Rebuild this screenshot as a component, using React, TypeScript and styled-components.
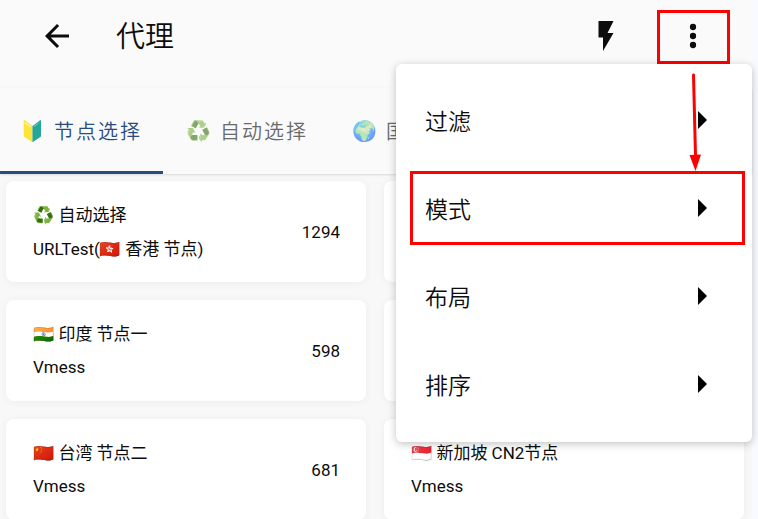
import React from 'react';
import styled, { createGlobalStyle } from 'styled-components';

const Global = createGlobalStyle`
  * { box-sizing: border-box; }
  body { margin: 0; background: #f9faff; overflow: hidden; }
  button { font: inherit; color: inherit; background: none; border: 0; padding: 0; margin: 0; cursor: pointer; }
`;

const Screen = styled.div`
  position: relative;
  margin-right: 6px;
  min-height: 100vh;
  background: #f8f8f8;
  color: #0c0c0c;
  font-family: Roboto, 'Noto Sans CJK SC', 'Noto Color Emoji', sans-serif;
  font-size: 17px;
  font-weight: 350;
`;

const AppBar = styled.header`
  display: flex;
  align-items: center;
  padding: 10px 22px 24px 21px;
  background: #fafafa;
`;

const Title = styled.h1`
  flex: 1;
  margin: 0 0 0 22px;
  font-size: 29px;
  line-height: 54px;
  font-weight: 350;
`;

const Actions = styled.div`
  display: flex;
  gap: 14px;
`;

const IconButton = styled.button<{ $marked?: boolean }>`
  display: flex;
  align-items: center;
  justify-content: center;
  width: 73px;
  height: 54px;
  padding: 0 1px 2px 0;
  border: 3px solid ${(p) => (p.$marked ? '#fe0000' : 'transparent')};
`;

const MenuAnchor = styled.div`
  position: relative;
`;

const Pointer = styled.svg`
  position: absolute;
  top: 63px;
  left: 30px;
  z-index: 3;
  pointer-events: none;
`;

const Tabs = styled.nav`
  display: flex;
  height: 86px;
  overflow: hidden;
  background: #fafafa;
  box-shadow: 0 1px 2px rgba(0, 0, 0, 0.12);
`;

const Tab = styled.button<{ $active?: boolean }>`
  display: flex;
  flex: none;
  align-items: center;
  gap: 5px;
  padding: 2px 21px 0 23px;
  border-bottom: 3px solid ${(p) => (p.$active ? '#284b80' : 'transparent')};
  color: ${(p) => (p.$active ? '#284b80' : '#6a6a6a')};
  font-size: 20px;
  letter-spacing: 2px;
  white-space: nowrap;

  &:first-child { padding-left: 20px; }
`;

const TabEmoji = styled.span<{ $active?: boolean }>`
  width: 29px;
  text-align: left;
  opacity: ${(p) => (p.$active ? 1 : 0.6)};
`;

const Grid = styled.main`
  display: grid;
  grid-template-columns: 1fr 1fr;
  grid-auto-rows: 101px;
  gap: 18px;
  padding: 7px 8px 0 6px;
`;

const Card = styled.article`
  display: flex;
  align-items: center;
  justify-content: space-between;
  padding: 0 26px 0 27px;
  border-radius: 8px;
  background: #fff;
  box-shadow: 0 1px 8px rgba(0, 0, 0, 0.05);
  font-weight: 400;
`;

const Line = styled.div`
  display: flex;
  align-items: center;
  height: 34px;
  padding-bottom: 2px;
  white-space: pre;
`;

const Popup = styled.ul`
  position: absolute;
  top: 64px;
  right: 0;
  z-index: 2;
  width: 356px;
  margin: 0;
  padding: 12px 7px 14px 14px;
  list-style: none;
  border-radius: 6px;
  background: #fff;
  box-shadow: 0 2px 8px rgba(0, 0, 0, 0.24);
`;

const Row = styled.li`
  display: flex;
  align-items: center;
  height: 88px;
`;

const Option = styled.button<{ $marked?: boolean }>`
  display: flex;
  align-items: center;
  justify-content: space-between;
  width: 100%;
  height: 74px;
  padding: 0 35px 0 12px;
  border: 3px solid ${(p) => (p.$marked ? '#fe0000' : 'transparent')};
  font-size: 23px;
`;

const tabs = [
  { emoji: '🔰', label: '节点选择' },
  { emoji: '♻️', label: '自动选择' },
  { emoji: '🌍', label: '国' },
];

const nodes = [
  { name: '♻️ 自动选择', type: 'URLTest(🇭🇰 香港 节点)', delay: '1294' },
  null,
  { name: '🇮🇳 印度 节点一', type: 'Vmess', delay: '598' },
  null,
  { name: '🇨🇳 台湾 节点二', type: 'Vmess', delay: '681' },
  { name: '🇸🇬 新加坡 CN2节点', type: 'Vmess', delay: '' },
];

export default function App() {
  return (
    <>
      <Global />
      <Screen>
        <AppBar>
          <IconButton aria-label="返回">
            <svg width="36" height="36" viewBox="0 0 24 24" fill="#0c0c0c">
              <path d="M20 11H7.83l5.59-5.59L12 4l-8 8 8 8 1.41-1.41L7.83 13H20v-2z" />
            </svg>
          </IconButton>
          <Title>代理</Title>
          <Actions>
            <IconButton aria-label="测速">
              <svg width="36" height="36" viewBox="0 0 24 24" fill="#0c0c0c">
                <path d="M7 2v11h3v9l7-12h-4l4-8z" />
              </svg>
            </IconButton>
            <MenuAnchor>
              <IconButton aria-label="更多" $marked>
                <svg width="36" height="36" viewBox="0 0 24 24" fill="#0c0c0c">
                  <circle cx="12" cy="6" r="2.1" />
                  <circle cx="12" cy="12" r="2.1" />
                  <circle cx="12" cy="18" r="2.1" />
                </svg>
              </IconButton>
              <Pointer width="16" height="99" viewBox="0 0 16 99">
                <path d="M6.5 2L8.5 83" stroke="#fe0000" strokeWidth="3" strokeLinecap="round" />
                <path d="M2.5 82L14 81.5L8.5 98z" fill="#fe0000" />
              </Pointer>
            </MenuAnchor>
          </Actions>
        </AppBar>
        <Tabs>
          {tabs.map((t, i) => (
            <Tab key={t.label} $active={i === 0}>
              <TabEmoji $active={i === 0}>{t.emoji}</TabEmoji>
              {t.label}
            </Tab>
          ))}
        </Tabs>
        <Grid>
          {nodes.map((n, i) => (
            <Card key={i}>
              {n && (
                <>
                  <div>
                    <Line>{n.name}</Line>
                    <Line>{n.type}</Line>
                  </div>
                  <span>{n.delay}</span>
                </>
              )}
            </Card>
          ))}
        </Grid>
        <Popup>
          {['过滤', '模式', '布局', '排序'].map((t) => (
            <Row key={t}>
              <Option $marked={t === '模式'}>
                {t}
                <svg width="9" height="18" viewBox="0 0 9 18"><path d="M0 0L9 9L0 18z" /></svg>
              </Option>
            </Row>
          ))}
        </Popup>
      </Screen>
    </>
  );
}
